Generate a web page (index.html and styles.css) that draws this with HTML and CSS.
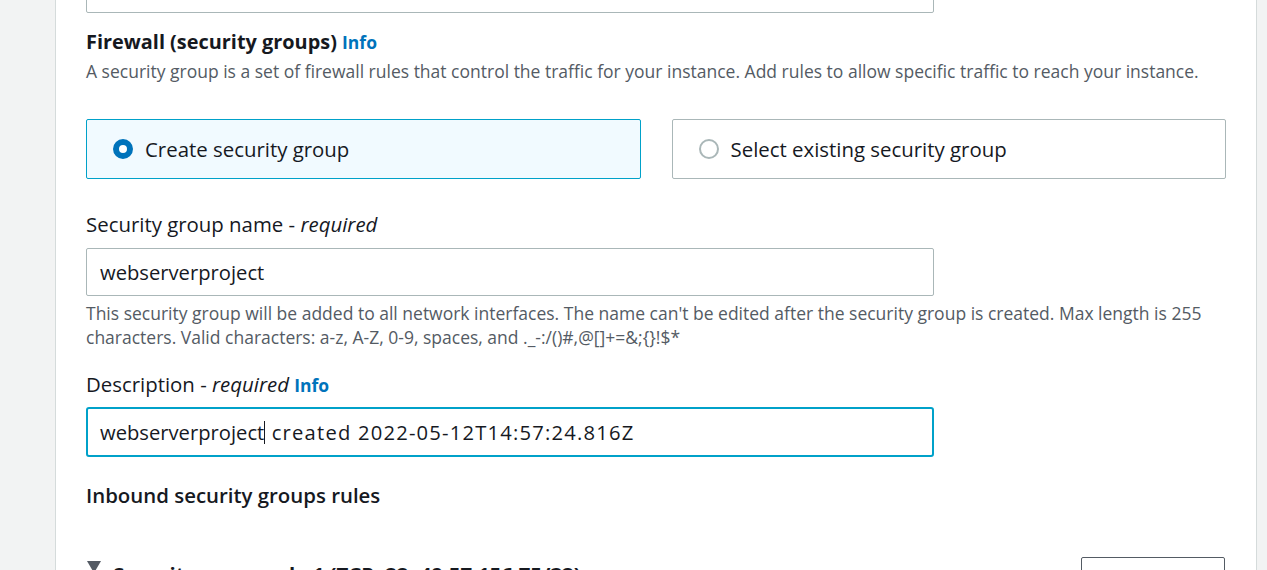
FILE: index.html
```html
<!DOCTYPE html>
<html>
<head>
<meta charset="utf-8">
<link rel="stylesheet" href="styles.css">
</head>
<body>
<div class="page">
  <div class="panel">
    <div class="input input-top"></div>

    <h2 class="heading">Firewall (security groups) <a class="info">Info</a></h2>
    <p class="desc">A security group is a set of firewall rules that control the traffic for your instance. Add rules to allow specific traffic to reach your instance.</p>

    <div class="tiles">
      <div class="tile tile-selected">
        <span class="radio radio-on"></span>
        <span class="tile-label">Create security group</span>
      </div>
      <div class="tile">
        <span class="radio"></span>
        <span class="tile-label">Select existing security group</span>
      </div>
    </div>

    <div class="field">
      <div class="label">Security group name - <em>required</em></div>
      <div class="input">webserverproject</div>
      <p class="hint">This security group will be added to all network interfaces. The name can't be edited after the security group is created. Max length is 255 characters. Valid characters: a-z, A-Z, 0-9, spaces, and ._-:/()#,@[]+=&amp;;{}!$*</p>
    </div>

    <div class="field field-desc">
      <div class="label">Description - <em>required</em> <a class="info">Info</a></div>
      <div class="input input-focus">webserverproject<span class="caret"></span><span class="wide"> created 2022-05-12T14:57:24.816Z</span></div>
    </div>

    <h3 class="subheading">Inbound security groups rules</h3>

    <div class="rule-row">
      <div class="rule-title"><span class="tri"></span><span>Security group rule 1 (TCP, 22, 49.57.156.75/32)</span></div>
      <div class="btn">Remove</div>
    </div>
  </div>
</div>
</body>
</html>
```

FILE: styles.css
```css
html, body {
  margin: 0;
  padding: 0;
  background: #f2f3f3;
  font-family: "Open Sans", "Noto Sans", sans-serif;
  color: #16191f;
}
.page {
  display: flex;
  height: 570px;
  overflow: hidden;
  padding-left: 55px;
  padding-right: 10px;
}
.panel {
  flex: 1;
  background: #ffffff;
  border-left: 1px solid #d5dbdb;
  border-right: 1px solid #d5dbdb;
  padding: 0 30px;
  overflow: hidden;
}
.input {
  box-sizing: border-box;
  width: 848px;
  height: 48px;
  border: 1px solid #aab7b8;
  border-radius: 2px;
  padding: 0 13px;
  display: flex;
  align-items: center;
  font-size: 20.2px;
  color: #16191f;
  white-space: pre;
}
.input-top {
  margin-top: -35px;
}
.heading {
  margin: 16px 0 0;
  font-size: 19.9px;
  font-weight: 700;
  line-height: 26px;
  color: #16191f;
}
.info {
  color: #0073bb;
  font-weight: 700;
  font-size: 17.5px;
}
.desc {
  margin: 4px 0 0;
  font-size: 17.5px;
  line-height: 24px;
  color: #545b64;
}
.tiles {
  display: grid;
  grid-template-columns: 1fr 1fr;
  column-gap: 31px;
  margin-top: 36px;
}
.tile {
  box-sizing: border-box;
  height: 60px;
  border: 1px solid #aab7b8;
  border-radius: 2px;
  display: flex;
  align-items: center;
  padding-left: 26px;
  gap: 12px;
}
.tile-selected {
  background: #f1faff;
  border-color: #00a1c9;
}
.radio {
  box-sizing: border-box;
  width: 20px;
  height: 20px;
  border-radius: 50%;
  border: 2px solid #aab7b8;
  background: #fff;
  flex: none;
}
.radio-on {
  border: 6px solid #0073bb;
}
.tile-label {
  font-size: 20.4px;
  color: #16191f;
}
.field {
  margin-top: 32px;
}
.field-desc {
  margin-top: 22px;
}
.label {
  font-size: 20.4px;
  line-height: 26px;
  margin-bottom: 11px;
  color: #16191f;
}
.field-desc .label {
  margin-bottom: 9px;
}
.label em {
  font-style: italic;
}
.hint {
  margin: 5px 0 0;
  font-size: 17.5px;
  line-height: 24px;
  color: #545b64;
}
.input-focus {
  border: 2px solid #00a1c9;
  border-radius: 3px;
  padding-left: 12px;
  height: 50px;
}
.wide {
  letter-spacing: 1.2px;
}
.caret {
  display: inline-block;
  width: 1px;
  height: 23px;
  background: #16191f;
}
.subheading {
  margin: 25px 0 0;
  font-size: 20.4px;
  font-weight: 600;
  line-height: 26px;
}
.rule-row {
  display: flex;
  justify-content: space-between;
  align-items: flex-start;
  margin-top: 49px;
}
.rule-title {
  display: flex;
  align-items: flex-start;
  gap: 12px;
  font-size: 20.4px;
  font-weight: 700;
  line-height: 26px;
  margin-top: 4px;
}
.tri {
  width: 0;
  height: 0;
  border-left: 7px solid transparent;
  border-right: 7px solid transparent;
  border-top: 12px solid #545b64;
  margin-top: 0;
  margin-left: 1px;
}
.btn {
  box-sizing: border-box;
  width: 144px;
  height: 48px;
  border: 1px solid #545b64;
  border-radius: 2px;
  margin-right: 1px;
  display: flex;
  align-items: center;
  justify-content: center;
  font-weight: 700;
  font-size: 18px;
  color: #545b64;
  padding-top: 22px;
}
```
